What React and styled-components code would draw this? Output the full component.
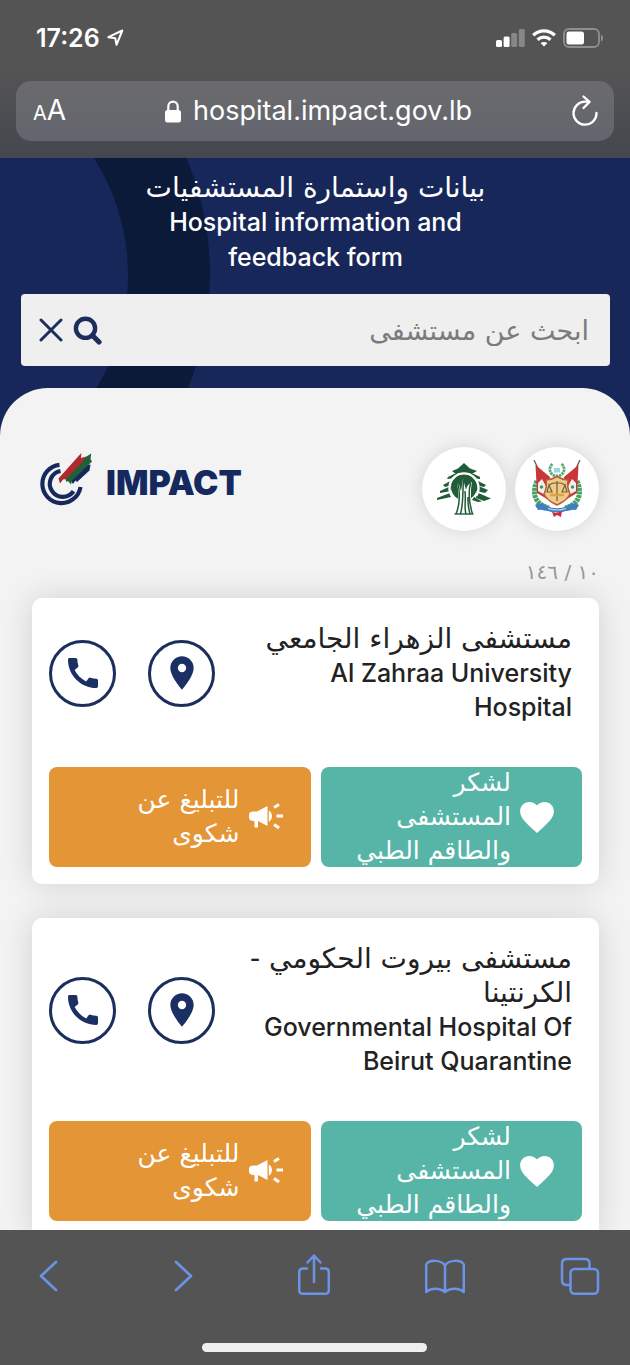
import styled, { createGlobalStyle } from "styled-components"
import { MdCall, MdPlace } from "react-icons/md"

const GlobalStyle = createGlobalStyle`
    * {
        box-sizing: border-box;
    }
    body {
        margin: 0;
        background-color: #545454;
    }
    button, input {
        font-family: inherit;
        border: none;
        padding: 0;
        margin: 0;
        background: none;
    }
    button {
        cursor: pointer;
    }
    svg {
        display: block;
        flex-shrink: 0;
    }
`

const Screen = styled.div`
    width: 100%;
    height: 100vh;
    display: flex;
    flex-direction: column;
    overflow: hidden;
    font-family: Inter, "DejaVu Sans", sans-serif;
`

/* browser chrome */

const TopBar = styled.header`
    flex-shrink: 0;
    padding: 20px 16px 17px;
    background: linear-gradient(#545454 0%, #545454 45%, #44474f 100%);
    color: #fff;
`

const StatusBar = styled.div`
    display: flex;
    align-items: center;
    justify-content: space-between;
    height: 36px;
    margin-bottom: 25px;
    padding: 0 10px 0 20px;
`

const StatusGroup = styled.div`
    display: flex;
    align-items: center;
    gap: 7px;
`

const Time = styled.span`
    font-size: 25px;
    font-weight: 600;
    line-height: 36px;
`

const AddressBar = styled.div`
    display: flex;
    align-items: center;
    justify-content: space-between;
    height: 60px;
    padding: 0 15px 0 17px;
    border-radius: 15px;
    background: linear-gradient(#6b6b6c, #63656f);
`

const TextSize = styled.button`
    display: flex;
    align-items: baseline;
    color: #fff;
    font-size: 20px;
    line-height: 36px;
`

const BigA = styled.span`
    font-size: 28px;
`

const Address = styled.div`
    display: flex;
    align-items: center;
    gap: 12px;
    font-size: 27px;
    line-height: 36px;
`

const IconButton = styled.button`
    display: flex;
    color: inherit;
`

const BottomBar = styled.footer`
    flex-shrink: 0;
    height: 135px;
    display: flex;
    flex-direction: column;
    align-items: center;
    justify-content: space-between;
    padding: 22px 30px 13px 28px;
    background-color: #545454;
    color: #6b94e6;
`

const Tools = styled.nav`
    width: 100%;
    display: flex;
    align-items: center;
    justify-content: space-between;
`

const HomeIndicator = styled.div`
    width: 225px;
    height: 9px;
    border-radius: 5px;
    background-color: #efefef;
`

/* page */

const Page = styled.main`
    flex: 1;
    min-height: 0;
    overflow: hidden;
    position: relative;
    background-color: #182759;
`

const Ring = styled.div`
    width: 600px;
    height: 600px;
    position: absolute;
    top: -183px;
    left: -390px;
    border: 82px solid #0a1a38;
    border-radius: 50%;
`

const Hero = styled.section`
    position: relative;
    padding: 12px 20px 22px 21px;
`

const Title = styled.h1`
    max-width: 370px;
    margin: 0 auto 19px;
    color: #fff;
    font-size: 25px;
    font-weight: 500;
    line-height: 35px;
    text-align: center;
`

const Arabic = styled.span`
    display: block;
    font-family: "DejaVu Sans", sans-serif;
    font-size: ${props => props.size || "28px"};
    white-space: ${props => props.$lines ? "pre-line" : "normal"};
`

const Search = styled.form`
    display: flex;
    align-items: center;
    gap: 10px;
    height: 72px;
    padding: 0 21px 0 18px;
    border-radius: 4px;
    background-color: #efefef;
    color: #1c2e5c;
`

const SearchInput = styled.input`
    flex: 1;
    min-width: 0;
    height: 100%;
    outline: none;
    color: #333;
    font-family: "DejaVu Sans", sans-serif;
    font-size: 27px;

    &::placeholder {
        color: #7a7b80;
        opacity: 1;
    }
`

const Content = styled.section`
    position: relative;
    min-height: 100%;
    padding: 59px 31px 0 32px;
    border-radius: 48px 48px 0 0;
    background-color: #f3f3f3;
`

const Brands = styled.div`
    display: flex;
    align-items: flex-start;
    justify-content: space-between;
    padding-left: 8px;
    margin-bottom: 25px;
`

const Impact = styled.div`
    display: flex;
    align-items: center;
    gap: 14px;
    height: 70px;
    color: #16295f;
    font-size: 34px;
    font-weight: 900;
`

const Seals = styled.div`
    display: flex;
    gap: 9px;
`

const Seal = styled.div`
    width: 84px;
    height: 84px;
    display: flex;
    align-items: center;
    justify-content: center;
    border-radius: 50%;
    background-color: #fff;
    box-shadow: 0 0 18px rgba(0, 0, 0, 0.12);
`

const Counter = styled.p`
    margin: 0 0 9px;
    color: #979797;
    font-family: "DejaVu Sans", sans-serif;
    font-size: 20px;
    line-height: 33px;
`

const Card = styled.article`
    margin-bottom: 34px;
    padding: 24px 17px 17px;
    border-radius: 10px;
    background-color: #fff;
    box-shadow: 0 0 32px rgba(0, 0, 0, 0.14);
`

const CardTop = styled.div`
    display: flex;
    align-items: center;
    gap: 24px;
    padding-right: 10px;
    margin-bottom: 43px;
`

const Contacts = styled.div`
    display: flex;
    gap: 32px;
`

const Contact = styled.a`
    width: 67px;
    height: 67px;
    display: flex;
    align-items: center;
    justify-content: center;
    border: 3px solid #1c2e5c;
    border-radius: 50%;
    color: #1a2f63;
`

const Name = styled.h2`
    flex: 1;
    margin: 0;
    color: #222;
    font-size: 25px;
    font-weight: 500;
    line-height: 34px;
`

const Latin = styled.span`
    display: block;
    text-align: right;
`

const Actions = styled.div`
    display: grid;
    grid-template-columns: 1fr 1fr;
    gap: 10px;
`

const Action = styled.button`
    height: 100px;
    display: flex;
    align-items: center;
    gap: 9px;
    padding: 0 28px;
    border-radius: 8px;
    background-color: ${props => props.color};
    color: #fff;
    line-height: 34px;
    text-align: right;
`

const LocationArrow = () => (
    <svg width="17" height="18" viewBox="0 0 17 18" fill="none" stroke="#fff" strokeWidth="2" strokeLinejoin="round">
        <path d="M1.3 8.2 L15.3 1.5 L9.5 15.8 L8.3 9.2 Z" />
    </svg>
)

const Signal = () => (
    <svg width="29" height="18" viewBox="0 0 29 18" fill="#fff">
        <rect x="0" y="11" width="6" height="7" rx="1.5" />
        <rect x="7.6" y="7.5" width="6" height="10.5" rx="1.5" />
        <rect x="15.2" y="4" width="6" height="14" rx="1.5" opacity="0.3" />
        <rect x="22.8" y="0" width="6" height="18" rx="1.5" opacity="0.3" />
    </svg>
)

const Wifi = () => (
    <svg width="24" height="18" viewBox="0 0 24 18" fill="none" stroke="#fff" strokeWidth="3.3">
        <path d="M1.2 6.3 C7.4 0.3 16.6 0.3 22.8 6.3" />
        <path d="M5.5 10.7 C9.3 7.2 14.7 7.2 18.5 10.7" />
        <path d="M12 17.6 L8.6 14.1 C10.6 12.5 13.4 12.5 15.4 14.1 Z" fill="#fff" stroke="none" />
    </svg>
)

const Battery = () => (
    <svg width="41" height="20" viewBox="0 0 41 20" fill="none">
        <rect x="1" y="1" width="35" height="18" rx="5" stroke="#8f8f8f" strokeWidth="1.8" />
        <rect x="3.5" y="3.5" width="17.5" height="13" rx="2.5" fill="#fff" />
        <path d="M38 6.5 C40.8 7.5 40.8 12.5 38 13.5 Z" fill="#8f8f8f" />
    </svg>
)

const Lock = () => (
    <svg width="16" height="23" viewBox="0 0 16 23" fill="none">
        <path d="M3.3 11 V6.5 C3.3 0 12.7 0 12.7 6.5 V11" stroke="#fff" strokeWidth="2.2" />
        <rect x="0" y="10" width="16" height="12.5" rx="2.5" fill="#fff" />
    </svg>
)

const Reload = () => (
    <svg width="28" height="32" viewBox="0 0 28 32" fill="none" stroke="#fff" strokeWidth="2.3" strokeLinecap="round" strokeLinejoin="round">
        <path d="M25.5 18 A11.5 11.5 0 1 1 14 6.7 H18" />
        <path d="M12.5 1.5 L18.5 6.9 L12.5 13" />
    </svg>
)

const Close = () => (
    <svg width="24" height="24" viewBox="0 0 24 24" fill="none" stroke="currentColor" strokeWidth="3" strokeLinecap="round">
        <path d="M2 2 L22 22 M22 2 L2 22" />
    </svg>
)

const Magnifier = () => (
    <svg width="30" height="29" viewBox="0 0 30 29" fill="none" stroke="currentColor">
        <circle cx="12.5" cy="12.3" r="9.6" strokeWidth="4.4" />
        <path d="M19.5 19.5 L26 26" strokeWidth="5.2" strokeLinecap="round" />
    </svg>
)

const ImpactMark = () => (
    <svg width="52" height="60" viewBox="0 0 52 60" fill="none">
        <path d="M19.5 12.8 A19.2 19.2 0 1 0 40.5 35" stroke="#16295f" strokeWidth="4.2" />
        <path d="M20.5 19 A13 13 0 1 0 33.5 39.2" stroke="#16295f" strokeWidth="4.2" />
        <path d="M30 27 L47 13 L50.5 12.5 L49.5 18.5 L37 30 L35.5 28.5 L33 32 Z" fill="#16295f" />
        <path d="M25 26 L41 8 L51.2 1.5 L50.5 7 L52 9.5 L32 28.5 L31 32.5 L28 29 L26.5 30 Z" fill="#20603a" />
        <path d="M18.5 26.5 L41.3 1 L41 6 L46 4.5 L43 9.5 L26 27 L23 27.5 L20 31.5 Z" fill="#ae2a2b" />
    </svg>
)

const Cedar = () => (
    <svg width="54" height="52" viewBox="0 0 54 52">
        <g fill="#215c38">
            <path d="M27 0 L33 5.5 L40 8 L36.5 10 L17.5 10 L15 8 L21 5.5 Z" />
            <path d="M11 14 L21 9 L20 15 L10 16 Z M33 9 L43 14 L43 16 L34 15 Z" />
            <path d="M6 22 L17 16 L15 22 L8 24 Z M37 16 L49 22 L47 24 L38 22 Z" />
            <path d="M3 28 L14 23 L14 28 L3 30 Z M39 22 L51 27 L48 30 L39 28 Z" />
            <path d="M0 35 L13 30 L14 34 L0 37 Z M39 29 L54 35.5 L47 38 L39 35 Z" />
            <path d="M37 34 L45 38.5 L41 39 L35 37 Z" />
            <circle cx="27" cy="24" r="13" />
        </g>
        <path d="M15 33 A14.5 14.5 0 1 1 39 33" fill="none" stroke="#fff" strokeWidth="2.4" />
        <path d="M20 19 C23 21 23 26 24 28 L26 16 L29 27 C30 22 33 20 35 19 C33 28 34 42 36 51 L18 51 C22 42 22 30 20 19 Z" fill="#fff" />
        <path d="M20.5 19 C23 27 23.5 40 19 51 M26.5 17 C25.5 30 26.5 40 23.5 51 M28 28 C29 37 27 45 29 51 M33.5 20 C30.5 32 33 43 35.5 51 M31 34 C30.5 42 32 47 33 51" fill="none" stroke="#215c38" strokeWidth="1.5" />
        <path d="M17.5 51 H36.5" stroke="#215c38" strokeWidth="1.4" />
    </svg>
)

const CoatOfArms = () => (
    <svg width="50" height="58" viewBox="0 0 50 58" fill="none">
        <path d="M5 21 C-1 34 4 45 17 48 M45 21 C51 34 46 45 33 48" stroke="#44a263" strokeWidth="5" strokeDasharray="3 0.6" />
        <path d="M2 0 L10 17 M48 0 L40 17" stroke="#6f5b4a" strokeWidth="1.3" />
        <path d="M3.5 5 L18 17 L15 39 L5 33 Z" fill="#c9363a" />
        <path d="M46.5 5 L32 17 L35 39 L45 33 Z" fill="#c9363a" />
        <path d="M6 23 L10 19 L15 28 L13 35 L6 31 Z M44 23 L40 19 L35 28 L37 35 L44 31 Z" fill="#f4efec" />
        <circle cx="9.5" cy="27" r="1.8" fill="#3d9b6b" />
        <circle cx="40.5" cy="27" r="1.8" fill="#3d9b6b" />
        <path d="M20.5 4 C15.5 8 18 16 25 16 C32 16 34.5 8 29.5 4" stroke="#58ad72" strokeWidth="2.8" strokeDasharray="2.5 0.6" />
        <rect x="22" y="8" width="6" height="4.5" fill="#a5cfe2" />
        <path d="M14 20 C18 20 21 19 25 16.5 C29 19 32 20 36 20 C35 26 36 30 38 34 C35 41 30 42 25 45 C20 42 15 41 12 34 C14 30 15 26 14 20 Z" fill="#f1c988" stroke="#b65d3e" strokeWidth="1.5" />
        <path d="M25 21 V41 M17 25 C21 22 29 22 33 25 M17 25 L15 32 H20 Z M33 25 L30 32 H35 Z" stroke="#71613c" strokeWidth="1.2" />
        <path d="M18 35 H32" stroke="#e0a33d" strokeWidth="2.5" />
        <path d="M3 45 C8 42 12 44 15 46 C21 49 29 49 35 46 C38 44 42 42 47 45 L44 50 C40 49 37 51 34 51 C28 53 22 53 16 51 C13 51 10 49 6 50 Z" fill="#3f7cc0" />
        <path d="M16 48.5 C22 50.5 28 50.5 34 48.5" stroke="#c9ddf0" strokeWidth="1.2" />
        <path d="M20 52 L24 53 L30 51 L29 57 L25 55 L22 57 Z" fill="#c92f3c" />
    </svg>
)

const Heart = () => (
    <svg width="34" height="31" viewBox="2 3 20 18.35" fill="#fff">
        <path d="M12 21.35l-1.45-1.32C5.4 15.36 2 12.28 2 8.5 2 5.42 4.42 3 7.5 3c1.74 0 3.41.81 4.5 2.09C13.09 3.81 14.76 3 16.5 3 19.58 3 22 5.42 22 8.5c0 3.78-3.4 6.86-8.55 11.54L12 21.35z" />
    </svg>
)

const Megaphone = () => (
    <svg width="34" height="28" viewBox="0 0 34 28" fill="#fff">
        <path d="M0 12 C0 9.5 1.5 8.5 4 8.5 H8 L18.5 3 V23 L9 18 V24.5 H5.5 V18 C1.5 18 0 16.5 0 14.5 Z" />
        <path d="M19.8 7.5 C24 9.5 24 16.5 19.8 19 Z" />
        <path d="M25 4.5 L30 1.5 M27.5 13 H34 M25 21.5 L30 25" stroke="#fff" strokeWidth="3.2" />
    </svg>
)

const Chevron = ({ points }) => (
    <svg width="40" height="48" viewBox="0 0 40 48" fill="none" stroke="currentColor" strokeWidth="2.6" strokeLinecap="round" strokeLinejoin="round">
        <polyline points={points} />
    </svg>
)

const Share = () => (
    <svg width="32" height="48" viewBox="0 0 32 48" fill="none" stroke="currentColor" strokeWidth="2.5" strokeLinecap="round" strokeLinejoin="round">
        <path d="M9 16.5 H5 C2.5 16.5 1.2 17.8 1.2 20.3 V38 C1.2 40.5 2.5 41.8 5 41.8 H27 C29.5 41.8 30.8 40.5 30.8 38 V20.3 C30.8 17.8 29.5 16.5 27 16.5 H23" />
        <path d="M16 30 V4 M9.5 10.5 L16 3.5 L22.5 10.5" />
    </svg>
)

const Book = () => (
    <svg width="40" height="48" viewBox="0 0 40 48" fill="none" stroke="currentColor" strokeWidth="2.5" strokeLinecap="round" strokeLinejoin="round">
        <path d="M20 13.5 C16 7.5 4 7.5 1.2 12.5 V40 C6 35.5 15 35.5 20 40 C25 35.5 34 35.5 38.8 40 V12.5 C36 7.5 24 7.5 20 13.5 Z M20 13.5 V40" />
    </svg>
)

const Tabs = () => (
    <svg width="40" height="48" viewBox="0 0 40 48" fill="none" stroke="currentColor" strokeWidth="2.5">
        <rect x="10.5" y="17" width="27.5" height="24.8" rx="4" />
        <path d="M10.5 33 H7 C3.5 33 2 31.5 2 28.5 V11.5 C2 8.500 3.5 7 7 7 H24.5 C28 7 29.5 8.500 29.5 11.5 V17" />
    </svg>
)

const hospitals = [
    { id: 1, arabic: "مستشفى الزهراء الجامعي", latin: "Al Zahraa University Hospital" },
    { id: 2, arabic: "مستشفى بيروت الحكومي - الكرنتينا", latin: "Governmental Hospital Of Beirut Quarantine" },
]

const Hospital = ({ arabic, latin }) => (
    <Card>
        <CardTop>
            <Contacts>
                <Contact href="#call" aria-label="Call"><MdCall size={40} /></Contact>
                <Contact href="#map" aria-label="Map"><MdPlace size={40} /></Contact>
            </Contacts>
            <Name>
                <Arabic dir="rtl" lang="ar">{arabic}</Arabic>
                <Latin>{latin}</Latin>
            </Name>
        </CardTop>
        <Actions dir="rtl">
            <Action color="#57b5a8">
                <Heart />
                <Arabic size="25px" $lines lang="ar">{"لشكر\nالمستشفى\nوالطاقم الطبي"}</Arabic>
            </Action>
            <Action color="#e49535">
                <Megaphone />
                <Arabic size="25px" $lines lang="ar">{"للتبليغ عن\nشكوى"}</Arabic>
            </Action>
        </Actions>
    </Card>
)

const App = () => {
    return (
        <Screen>
            <GlobalStyle />
            <TopBar>
                <StatusBar>
                    <StatusGroup>
                        <Time>17:26</Time>
                        <LocationArrow />
                    </StatusGroup>
                    <StatusGroup>
                        <Signal />
                        <Wifi />
                        <Battery />
                    </StatusGroup>
                </StatusBar>
                <AddressBar>
                    <TextSize aria-label="Text size">A<BigA>A</BigA></TextSize>
                    <Address><Lock />hospital.impact.gov.lb</Address>
                    <IconButton aria-label="Reload"><Reload /></IconButton>
                </AddressBar>
            </TopBar>

            <Page>
                <Ring />
                <Hero>
                    <Title>
                        <Arabic dir="rtl" lang="ar">بيانات واستمارة المستشفيات</Arabic>
                        Hospital information and feedback form
                    </Title>
                    <Search>
                        <IconButton type="reset" aria-label="Clear"><Close /></IconButton>
                        <IconButton type="submit" aria-label="Search"><Magnifier /></IconButton>
                        <SearchInput dir="rtl" lang="ar" placeholder="ابحث عن مستشفى" aria-label="ابحث عن مستشفى" />
                    </Search>
                </Hero>
                <Content>
                    <Brands>
                        <Impact><ImpactMark />IMPACT</Impact>
                        <Seals>
                            <Seal><Cedar /></Seal>
                            <Seal><CoatOfArms /></Seal>
                        </Seals>
                    </Brands>
                    <Counter dir="rtl">١٠ / ١٤٦</Counter>
                    {hospitals.map(h => <Hospital key={h.id} {...h} />)}
                </Content>
            </Page>

            <BottomBar>
                <Tools>
                    <IconButton aria-label="Back"><Chevron points="28,10 13,24 28,38" /></IconButton>
                    <IconButton aria-label="Forward"><Chevron points="13,10 28,24 13,38" /></IconButton>
                    <IconButton aria-label="Share"><Share /></IconButton>
                    <IconButton aria-label="Bookmarks"><Book /></IconButton>
                    <IconButton aria-label="Tabs"><Tabs /></IconButton>
                </Tools>
                <HomeIndicator />
            </BottomBar>
        </Screen>
    )
}

export default App
